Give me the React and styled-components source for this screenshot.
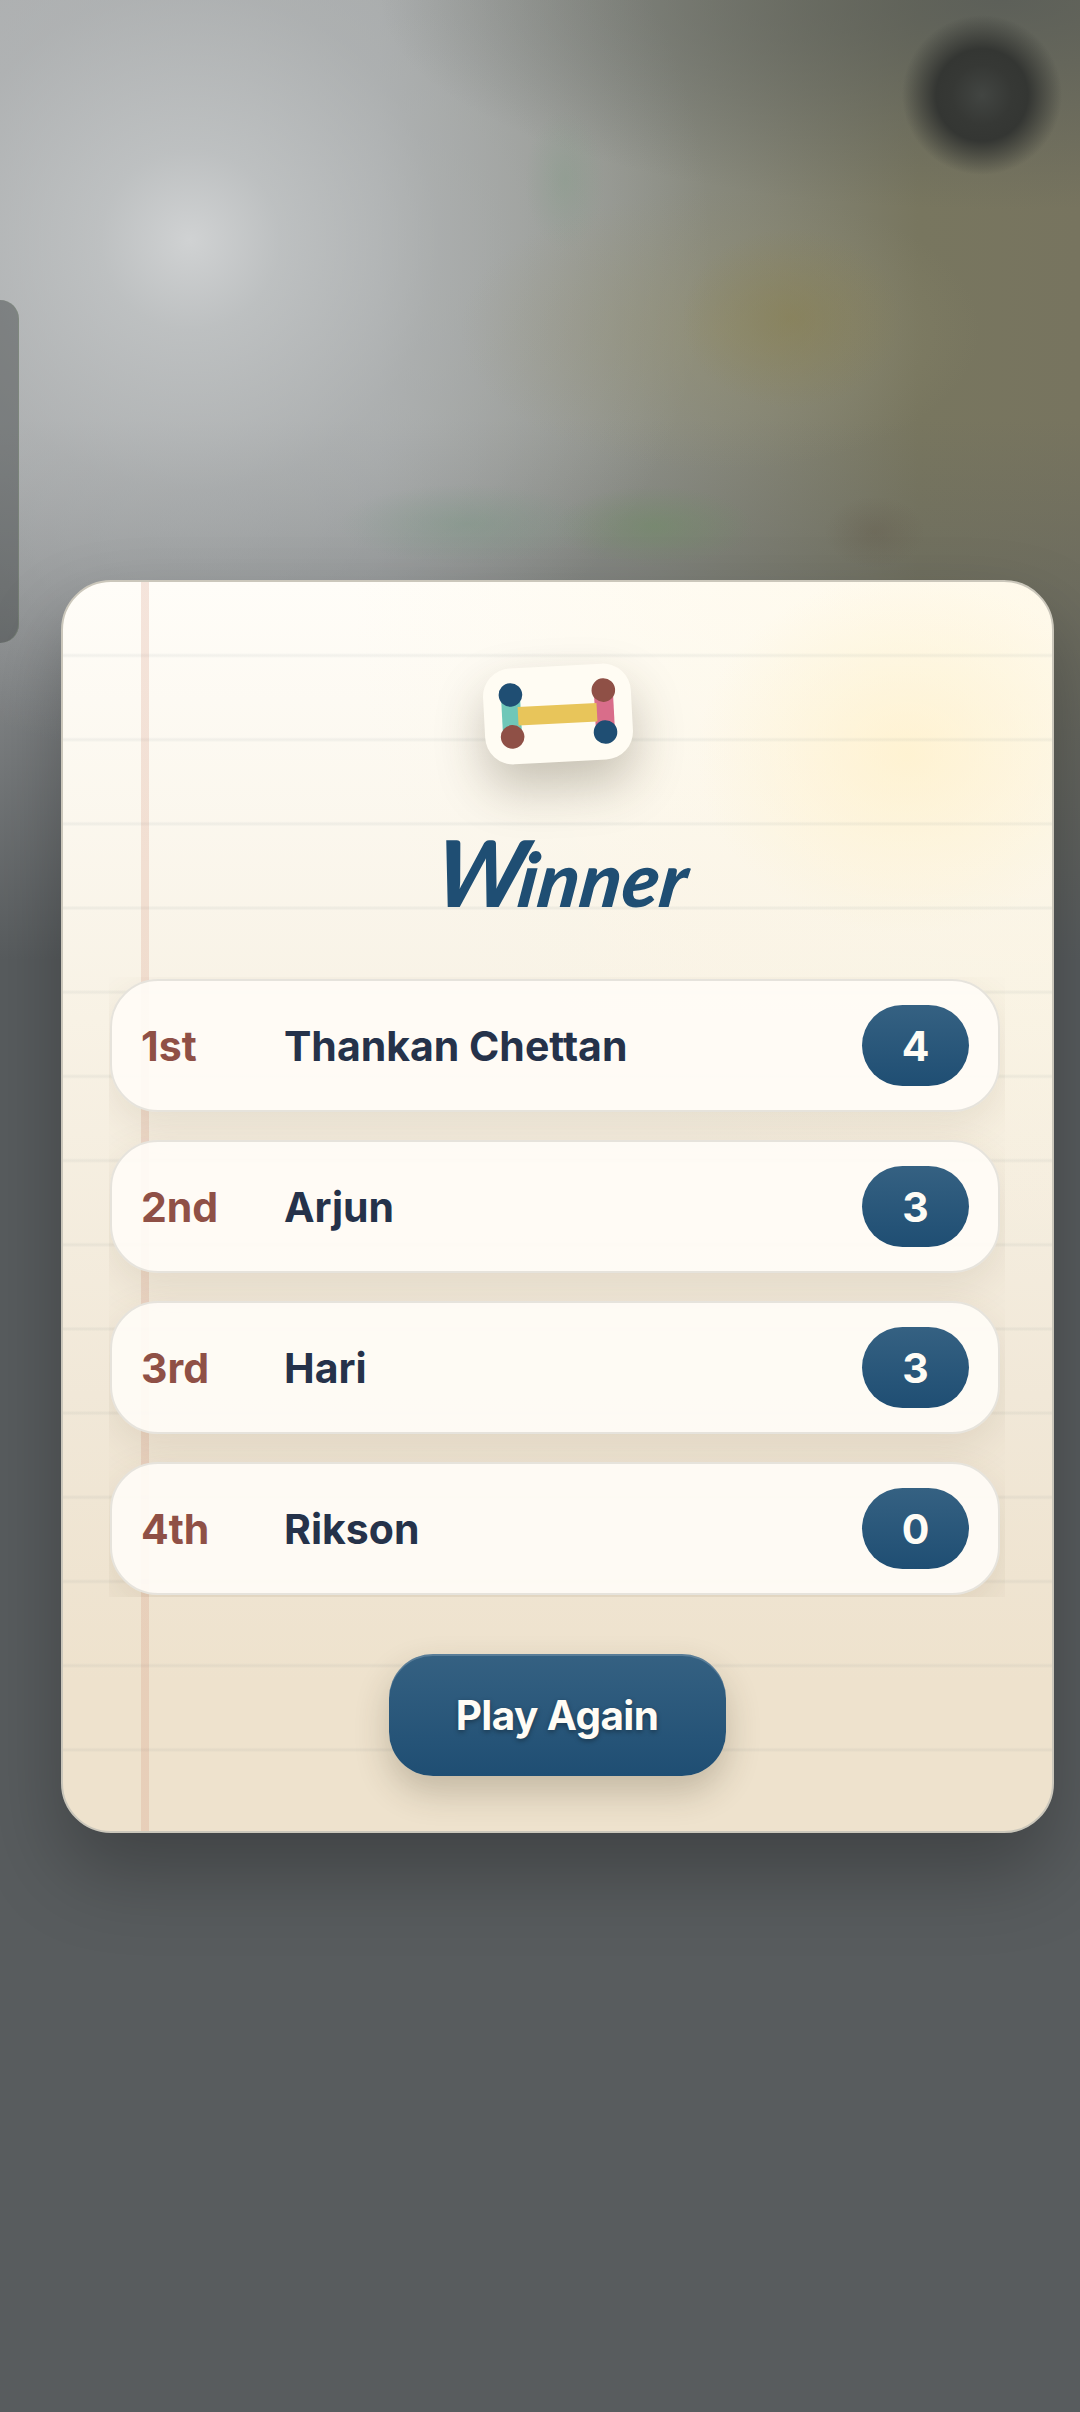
import React from "react";
import styled, { createGlobalStyle } from "styled-components";

const Global = createGlobalStyle`
  html, body { margin: 0; padding: 0; }
  body { background: #575c5d; font-family: "Inter", "Liberation Sans", sans-serif; }
`;

const Page = styled.div`
  position: relative;
  width: 1080px;
  height: 2412px;
  box-sizing: border-box;
  padding: 580px 26px 0 61px;
  overflow: hidden;
`;

const BlurredBoard = styled.div`
  position: absolute;
  inset: 0;
  background:
    radial-gradient(circle at 982px 95px, #424542 0, #363835 30px, #343633 46px, rgba(52,54,51,0) 80px),
    radial-gradient(ellipse 40px 70px at 565px 180px, rgba(130,155,135,.38), rgba(130,155,135,0)),
    radial-gradient(ellipse 130px 40px at 468px 524px, rgba(120,150,130,.42), rgba(120,150,130,0)),
    radial-gradient(ellipse 100px 40px at 654px 526px, rgba(110,140,100,.5), rgba(110,140,100,0)),
    radial-gradient(ellipse 50px 36px at 875px 532px, rgba(95,85,70,.3), rgba(95,85,70,0)),
    radial-gradient(ellipse 110px 90px at 792px 318px, rgba(135,125,75,.5), rgba(135,125,75,0)),
    radial-gradient(ellipse 260px 140px at 720px 330px, rgba(150,146,115,.55), rgba(150,146,115,0)),
    radial-gradient(ellipse 620px 210px at 1000px 0, rgba(88,92,88,.85), rgba(88,92,88,0)),
    radial-gradient(circle at 190px 240px, rgba(210,212,213,.95) 0, rgba(197,200,201,.75) 90px, rgba(182,185,186,.5) 250px, rgba(170,173,174,0) 520px),
    linear-gradient(180deg, rgba(87,92,93,0) 0, rgba(87,92,93,0) 420px, #585c5e 960px),
    linear-gradient(90deg, #a9abac 0, #a3a6a6 35%, #8d8f86 60%, #78765f 85%, #77745f 100%);
`;

const SidePanel = styled.div`
  position: absolute;
  left: 0;
  top: 300px;
  width: 19px;
  height: 343px;
  border-radius: 0 20px 20px 0;
  background: rgba(50, 55, 55, .42);
  box-shadow: inset -1px 0 0 rgba(130, 150, 120, .35);
`;

const Card = styled.main`
  position: relative;
  width: 993px;
  height: 1253px;
  box-sizing: border-box;
  border: 2px solid #cbc7bb;
  border-radius: 50px;
  padding: 84px 47px 55px 46px;
  display: flex;
  flex-direction: column;
  align-items: center;
  overflow: hidden;
  box-shadow: 0 40px 80px rgba(0, 0, 0, .27);
  background:
    linear-gradient(90deg, transparent 78px, rgba(205, 130, 105, .2) 78px, rgba(205, 130, 105, .2) 86px, transparent 86px),
    repeating-linear-gradient(180deg, transparent 0, transparent 71px, rgba(95, 115, 120, .07) 73px, rgba(95, 115, 120, .07) 74px, transparent 76px, transparent 84.18px),
    radial-gradient(ellipse 210px 180px at 844px 172px, rgba(255, 240, 200, .7), rgba(255, 240, 200, 0)),
    radial-gradient(ellipse 700px 700px at 100% 0, rgba(255, 246, 222, .55), rgba(255, 246, 222, 0)),
    linear-gradient(180deg, #fffdf8 0, #f8f2e5 35%, #f1e8d8 65%, #eee2cd 88%);
`;

const LogoTile = styled.div`
  flex: none;
  width: 148px;
  height: 96px;
  border-radius: 28px;
  background: #fffcf3;
  transform: rotate(-3deg);
  box-shadow: 0 24px 50px rgba(60, 50, 30, .28);
  margin-left: 1px;
`;

const LogoArt = styled.svg`
  display: block;
  width: 148px;
  height: 96px;
`;

const Title = styled.h1`
  flex: none;
  margin: 76px 0 0 14px;
  height: 68px;
  font-family: "Lato", "Liberation Sans", sans-serif;
  font-style: italic;
  font-weight: 900;
  font-size: 75px;
  line-height: 68px;
  letter-spacing: 1px;
  color: #1f4e73;
  transform: skewX(-8deg);
  &::first-letter {
    font-size: 92px;
    letter-spacing: -6px;
  }
`;

const RankList = styled.ol`
  flex: none;
  align-self: flex-start;
  width: 896px;
  height: 620px;
  box-sizing: border-box;
  margin: 71px 0 0 0;
  padding: 2px 5px 0 1px;
  list-style: none;
  display: flex;
  flex-direction: column;
  gap: 28px;
  overflow: hidden;
`;

const Row = styled.li`
  flex: none;
  height: 133px;
  box-sizing: border-box;
  border: 2px solid #e6e3dc;
  border-radius: 48px;
  padding: 0 29px 0 29px;
  display: flex;
  align-items: center;
  background: rgba(255, 252, 246, .92);
  box-shadow: 0 14px 40px rgba(110, 85, 50, .12);
`;

const Rank = styled.span`
  flex: none;
  width: 143px;
  font-size: 41px;
  font-weight: 700;
  color: #8f5046;
`;

const Name = styled.span`
  flex: 1;
  font-size: 41px;
  font-weight: 700;
  color: #25324a;
`;

const Score = styled.span`
  flex: none;
  width: 107px;
  height: 81px;
  border-radius: 41px;
  display: flex;
  align-items: center;
  justify-content: center;
  font-size: 41px;
  font-weight: 700;
  color: #fffcf5;
  background: linear-gradient(180deg, #356182 0, #1f4e73 100%);
`;

const PlayAgain = styled.button`
  flex: none;
  margin-top: 57px;
  width: 337px;
  height: 122px;
  border: 0;
  border-radius: 44px;
  font-family: "Inter", "Liberation Sans", sans-serif;
  font-size: 40.5px;
  font-weight: 700;
  letter-spacing: -0.6px;
  color: #fffcf5;
  text-shadow: 0 2px 5px rgba(0, 0, 0, .35);
  background: linear-gradient(180deg, #356182 0, #1f4e73 100%);
  box-shadow: inset 0 2px 0 rgba(255, 255, 255, .18), 0 16px 34px rgba(60, 50, 30, .24);
`;

const players = [
  { rank: "1st", name: "Thankan Chettan", score: 4 },
  { rank: "2nd", name: "Arjun", score: 3 },
  { rank: "3rd", name: "Hari", score: 3 },
  { rank: "4th", name: "Rikson", score: 0 },
];

export default function App() {
  return (
    <Page>
      <Global />
      <BlurredBoard />
      <SidePanel />
      <Card>
        <LogoTile>
          <LogoArt viewBox="0 0 148 96">
            <rect x="18" y="26" width="19" height="44" fill="#6fc7b8" />
            <rect x="111" y="26" width="19" height="44" fill="#d96d8a" />
            <rect x="34" y="39" width="79" height="18.5" fill="#e8c55a" />
            <circle cx="27.5" cy="26.5" r="11.8" fill="#1f4e73" />
            <circle cx="27.5" cy="68.5" r="11.8" fill="#8f5046" />
            <circle cx="120.5" cy="26.5" r="11.8" fill="#8f5046" />
            <circle cx="120.5" cy="68.5" r="11.8" fill="#1f4e73" />
          </LogoArt>
        </LogoTile>
        <Title>Winner</Title>
        <RankList>
          {players.map((p) => (
            <Row key={p.rank}>
              <Rank>{p.rank}</Rank>
              <Name>{p.name}</Name>
              <Score>{p.score}</Score>
            </Row>
          ))}
        </RankList>
        <PlayAgain>Play Again</PlayAgain>
      </Card>
    </Page>
  );
}
